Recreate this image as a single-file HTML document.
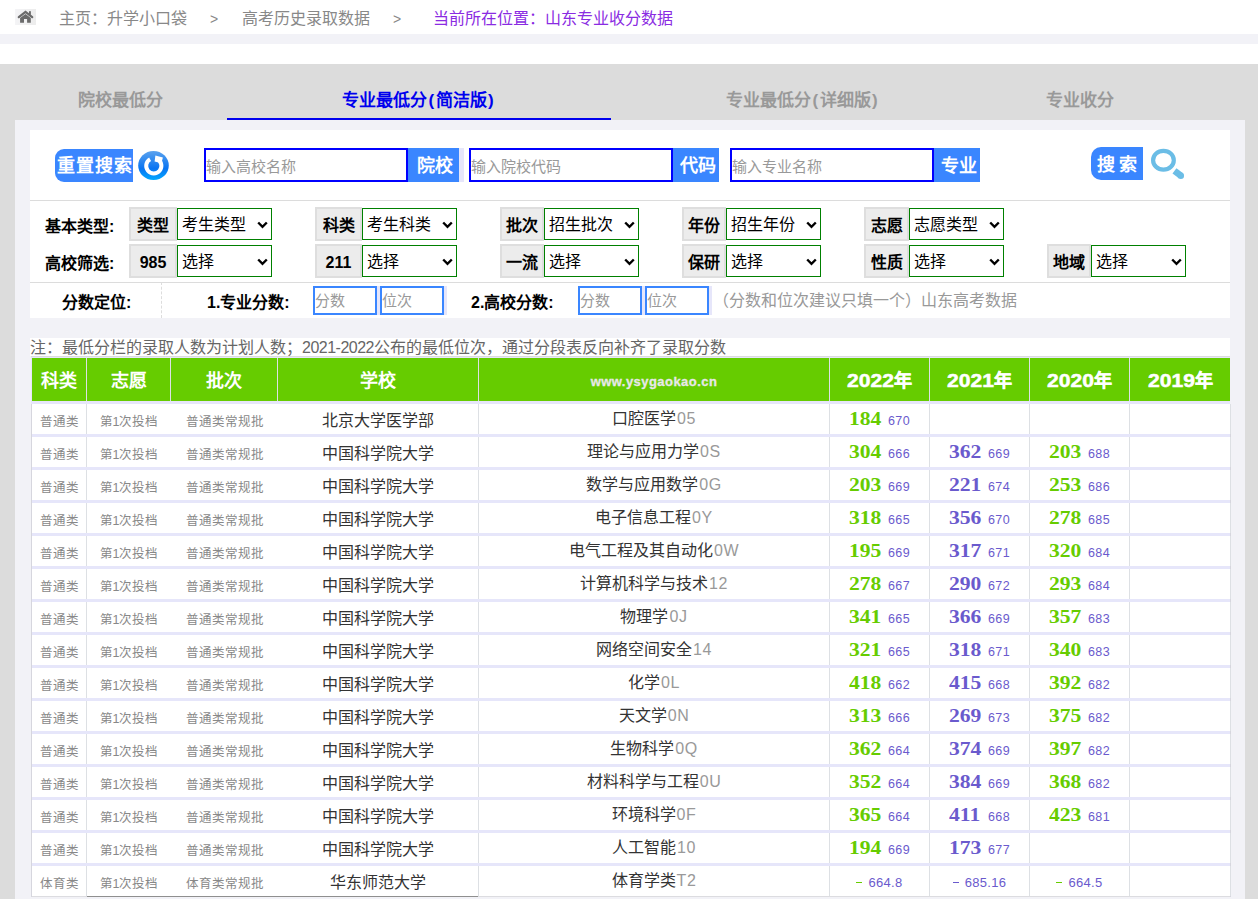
<!DOCTYPE html>
<html lang="zh-CN">
<head>
<meta charset="utf-8">
<style>
*{box-sizing:border-box;margin:0;padding:0}
html,body{width:1258px;height:899px;overflow:hidden;background:#fff;font-family:"Liberation Sans",sans-serif;}
.abs{position:absolute;white-space:nowrap}
#crumb{font-size:16px;color:#888;line-height:20px;margin-top:1px}
.strip{position:absolute;left:0;top:34px;width:1258px;height:10px;background:#f2f2f7}
.gpanel{position:absolute;left:0;top:64px;width:1258px;height:835px;background:#dcdcdc}
.lpanel{position:absolute;left:15px;top:120px;width:1230px;height:779px;background:#f2f2f7}
.tab{position:absolute;top:91px;font-size:17px;font-weight:bold;color:#999;line-height:20px;white-space:nowrap}
.tab.act{color:#0000ee}
.uline{position:absolute;left:227px;top:118px;width:384px;height:2px;background:#0000ee}
.wbox{position:absolute;left:30px;top:130px;width:1200px;height:188px;background:#fff}
.sep{position:absolute;left:30px;width:1200px;height:1px;background:#dcdcdc}
.btnr{position:absolute;background:#3a86ff;color:#fff;font-family:"Liberation Serif",serif;font-weight:bold;font-size:18px;letter-spacing:1px;text-indent:1px;line-height:35px;text-align:center;border-radius:9px 0 0 9px}
.inp{position:absolute;border:2px solid #0000ff;background:#fff;color:#999;font-size:15px;line-height:33px;padding-left:0px;white-space:nowrap}
.ibtn{position:absolute;background:#3a86ff;color:#fff;font-size:18px;font-weight:bold;line-height:37px;text-align:center}
.lab{position:absolute;font-size:16px;font-weight:bold;color:#000;line-height:20px;white-space:nowrap}
.lbox{position:absolute;height:34px;background:#ececec;border:2px solid #dedede;font-size:16px;font-weight:bold;text-align:center;line-height:34px;color:#000}
.sel{position:absolute;height:32px;border:1px solid #008000;background:#fff;font-size:16px;line-height:32px;padding-left:4px;color:#000;white-space:nowrap}
.sel .arr{position:absolute;left:79px;top:12px;width:11px;height:8px}
.sinp{position:absolute;top:286px;width:64px;height:29px;border:2px solid #3a86ff;background:#fff;color:#999;font-size:15px;line-height:26px;padding-left:0px}
.sstrip{position:absolute;top:286px;height:29px;width:3px;background:#e6e6fa}
.note{position:absolute;left:30px;top:338px;width:1200px;height:18px;background:#fff;font-size:16px;color:#666;line-height:20px;white-space:nowrap}
.thead{position:absolute;left:31px;top:356px;width:1199px;height:48px;border-top:1px solid #dcdcdc;background:#e6e6fa}
.hrow{position:absolute;left:32px;top:358px;width:1198px;height:43px;background:#66cc00}
.hc{position:absolute;top:0;height:43px;border-right:1px solid #dde0e4;color:#fff;font-weight:bold;font-size:18px;line-height:47px;text-align:center;white-space:nowrap}
.tbody{position:absolute;left:31px;top:404px;width:1200px;height:493px;border-left:1px solid #d6d6de;border-right:1px solid #d6d6de}
.row{position:absolute;left:32px;width:1198px;height:33px;background:#fff;border-bottom:3px solid #e6e6fa}
.c{position:absolute;top:0;height:30px;border-right:1px solid #dde0e4;text-align:center;white-space:nowrap;line-height:30px}
.s{font-size:12.5px;color:#888;line-height:37px}
.sch{font-size:16px;color:#333;line-height:33px}
.maj{font-size:16px;color:#333}
.code{color:#999;font-size:16px;letter-spacing:0.6px;margin-left:1px}
.yr{line-height:31px}
.sc{display:inline-block;width:33px;margin-right:6px;text-align:left;font-family:"Liberation Serif",serif;font-weight:bold;font-size:18px}
.sc i{font-style:normal;display:inline-block;transform:scaleX(1.2);transform-origin:0 50%}
.g{color:#66cc00}
.p{color:#6a5acd}
.rk{font-size:12.5px;color:#6a5acd;letter-spacing:0.4px}
.rk2{font-size:13px;letter-spacing:0.3px;margin-left:6px}
.dash{display:inline-block;width:6px;height:1.5px;vertical-align:4px}
.gbg{background:#66cc00}.pbg{background:#6a5acd}

.row.last{height:31px;border-bottom:1px solid #dcdce0}
.par{display:inline-block;width:8.5px;text-align:center}
.yr2{letter-spacing:-0.5px}
.hy{-webkit-text-stroke:0.5px #fff}
.hy i{font-style:normal;display:inline-block;width:47px;text-align:left}
.hy i b{display:inline-block;transform:scaleX(1.17);transform-origin:0 50%}
</style>
</head>
<body>
<!-- breadcrumb -->
<div class="abs" style="left:15px;top:9px;width:21px;height:16px;background:linear-gradient(90deg,#f4f4f6,#ececec)"></div>
<svg class="abs" style="left:15px;top:9px" width="21" height="16" viewBox="0 0 21 16"><polyline points="3.8,8.2 10.5,2.8 17.2,8.2" fill="none" stroke="#6b6b6b" stroke-width="2.2" stroke-linecap="round"/><path d="M5.1 9.1 L10.5 5.1 L15.8 9.1 V13.8 H12.1 V9.9 H9 V13.8 H5.1 Z" fill="#6b6b6b"/><rect x="14" y="2.2" width="1.9" height="3.6" fill="#6b6b6b"/></svg>
<div id="crumb" class="abs" style="left:59px;top:8px">主页：升学小口袋</div>
<div id="crumb" class="abs" style="left:210px;top:7.5px;color:#888;font-size:14px">&gt;</div>
<div id="crumb" class="abs" style="left:242px;top:8px">高考历史录取数据</div>
<div id="crumb" class="abs" style="left:393px;top:7.5px;color:#888;font-size:14px">&gt;</div>
<div id="crumb" class="abs" style="left:433px;top:8px;color:#8a2be2">当前所在位置：山东专业收分数据</div>
<div class="strip"></div>
<div class="gpanel"></div>
<div class="lpanel"></div>
<div class="tab" style="left:78px">院校最低分</div>
<div class="tab act" style="left:342px">专业最低分<span class="par">(</span>简洁版<span class="par">)</span></div>
<div class="tab" style="left:726px">专业最低分<span class="par">(</span>详细版<span class="par">)</span></div>
<div class="tab" style="left:1046px">专业收分</div>
<div class="uline"></div>
<div class="wbox"></div>
<div class="sep" style="top:200px"></div>
<div class="sep" style="top:282px"></div>
<!-- search row -->
<div class="btnr" style="left:55px;top:149px;width:78px;height:33px">重置搜索</div>
<svg class="abs" style="left:138px;top:151px" width="31" height="29" viewBox="0 0 31 29">
<defs><linearGradient id="rg" x1="0" y1="0" x2="0" y2="1"><stop offset="0" stop-color="#5aa2ee"/><stop offset="0.6" stop-color="#0a74f2"/><stop offset="1" stop-color="#00a8ff"/></linearGradient></defs>
<ellipse cx="15.5" cy="14.5" rx="15.3" ry="14.5" fill="url(#rg)"/>
<path d="M12.1 8.25 A7.6 7.6 0 1 0 19.6 8.3" fill="none" stroke="#fff" stroke-width="4"/>
<path d="M17.4 4.6 L24.9 6.6 L24 9.9 L20.6 11.6 L16.6 10.5 Z" fill="#fff"/>
</svg>
<div class="inp" style="left:204px;top:148px;width:204px;height:34px">输入高校名称</div>
<div class="ibtn" style="left:408px;top:148px;width:51px;height:34px;text-align:left;padding-left:9px">院校</div>
<div class="abs" style="left:459px;top:148px;width:5px;height:34px;background:#e6e6fa"></div>
<div class="inp" style="left:469px;top:148px;width:204px;height:34px">输入院校代码</div>
<div class="ibtn" style="left:673px;top:148px;width:46px;height:34px;text-align:left;padding-left:7px">代码</div>
<div class="inp" style="left:730px;top:148px;width:204px;height:34px">输入专业名称</div>
<div class="ibtn" style="left:934px;top:148px;width:46px;height:34px;text-align:left;padding-left:7px">专业</div>
<div class="btnr" style="left:1091px;top:147px;width:52px;height:33px;border-radius:10px 0 0 10px;letter-spacing:4px;text-indent:4px;line-height:36px">搜索</div>
<svg class="abs" style="left:1148px;top:146px" width="40" height="36" viewBox="0 0 40 36">
<ellipse cx="15.45" cy="14.2" rx="10.35" ry="9.4" fill="none" stroke="#6bbde6" stroke-width="4.2"/>
<path d="M26.5 24.9 L32.8 29.7" stroke="#6bbde6" stroke-width="6.5"/><circle cx="32.8" cy="29.7" r="3.25" fill="#6bbde6"/>
</svg>
<!-- filter rows -->
<div class="lab" style="left:45px;top:217px">基本类型:</div>
<div class="lab" style="left:45px;top:254px">高校筛选:</div>
<div class="lbox" style="left:129px;top:207px;width:48px">类型</div>
<div class="sel" style="left:177px;top:208px;width:95px">考生类型<svg class="arr" viewBox="0 0 11 8"><path d="M1.2 1.5 L5.5 5.8 L9.8 1.5" fill="none" stroke="#000" stroke-width="2.4"/></svg></div>
<div class="lbox" style="left:315px;top:207px;width:47px">科类</div>
<div class="sel" style="left:362px;top:208px;width:95px">考生科类<svg class="arr" viewBox="0 0 11 8"><path d="M1.2 1.5 L5.5 5.8 L9.8 1.5" fill="none" stroke="#000" stroke-width="2.4"/></svg></div>
<div class="lbox" style="left:500px;top:207px;width:44px">批次</div>
<div class="sel" style="left:544px;top:208px;width:95px">招生批次<svg class="arr" viewBox="0 0 11 8"><path d="M1.2 1.5 L5.5 5.8 L9.8 1.5" fill="none" stroke="#000" stroke-width="2.4"/></svg></div>
<div class="lbox" style="left:682px;top:207px;width:44px">年份</div>
<div class="sel" style="left:726px;top:208px;width:95px">招生年份<svg class="arr" viewBox="0 0 11 8"><path d="M1.2 1.5 L5.5 5.8 L9.8 1.5" fill="none" stroke="#000" stroke-width="2.4"/></svg></div>
<div class="lbox" style="left:864px;top:207px;width:45px">志愿</div>
<div class="sel" style="left:909px;top:208px;width:95px">志愿类型<svg class="arr" viewBox="0 0 11 8"><path d="M1.2 1.5 L5.5 5.8 L9.8 1.5" fill="none" stroke="#000" stroke-width="2.4"/></svg></div>
<div class="lbox" style="left:129px;top:244px;width:48px">985</div>
<div class="sel" style="left:177px;top:245px;width:95px">选择<svg class="arr" viewBox="0 0 11 8"><path d="M1.2 1.5 L5.5 5.8 L9.8 1.5" fill="none" stroke="#000" stroke-width="2.4"/></svg></div>
<div class="lbox" style="left:315px;top:244px;width:47px">211</div>
<div class="sel" style="left:362px;top:245px;width:95px">选择<svg class="arr" viewBox="0 0 11 8"><path d="M1.2 1.5 L5.5 5.8 L9.8 1.5" fill="none" stroke="#000" stroke-width="2.4"/></svg></div>
<div class="lbox" style="left:500px;top:244px;width:44px">一流</div>
<div class="sel" style="left:544px;top:245px;width:95px">选择<svg class="arr" viewBox="0 0 11 8"><path d="M1.2 1.5 L5.5 5.8 L9.8 1.5" fill="none" stroke="#000" stroke-width="2.4"/></svg></div>
<div class="lbox" style="left:682px;top:244px;width:44px">保研</div>
<div class="sel" style="left:726px;top:245px;width:95px">选择<svg class="arr" viewBox="0 0 11 8"><path d="M1.2 1.5 L5.5 5.8 L9.8 1.5" fill="none" stroke="#000" stroke-width="2.4"/></svg></div>
<div class="lbox" style="left:864px;top:244px;width:45px">性质</div>
<div class="sel" style="left:909px;top:245px;width:95px">选择<svg class="arr" viewBox="0 0 11 8"><path d="M1.2 1.5 L5.5 5.8 L9.8 1.5" fill="none" stroke="#000" stroke-width="2.4"/></svg></div>
<div class="lbox" style="left:1047px;top:244px;width:44px">地域</div>
<div class="sel" style="left:1091px;top:245px;width:95px">选择<svg class="arr" viewBox="0 0 11 8"><path d="M1.2 1.5 L5.5 5.8 L9.8 1.5" fill="none" stroke="#000" stroke-width="2.4"/></svg></div><!-- score row -->
<div class="abs" style="left:161px;top:282px;width:0;height:36px;border-left:1px dashed #ddd"></div>
<div class="lab" style="left:62px;top:293px">分数定位:</div>
<div class="lab" style="left:207px;top:293px">1.专业分数:</div>
<div class="sinp" style="left:313px">分数</div>
<div class="sstrip" style="left:377px"></div>
<div class="sinp" style="left:380px">位次</div>
<div class="sstrip" style="left:444px"></div>
<div class="lab" style="left:471px;top:293px">2.高校分数:</div>
<div class="sinp" style="left:578px">分数</div>
<div class="sstrip" style="left:642px"></div>
<div class="sinp" style="left:645px">位次</div>
<div class="sstrip" style="left:709px"></div>
<div class="abs" style="left:713px;top:291px;font-size:16px;color:#999;line-height:20px">（分数和位次建议只填一个）山东高考数据</div>
<!-- note -->
<div class="note">注：最低分栏的录取人数为计划人数；<span class="yr2">2021-2022</span>公布的最低位次，通过分段表反向补齐了录取分数</div>
<!-- table -->
<div class="thead"></div>
<div class="tbody"></div>
<div class="hrow">
<div class="hc" style="left:0;width:55px">科类</div>
<div class="hc" style="left:55px;width:84px">志愿</div>
<div class="hc" style="left:139px;width:107px">批次</div>
<div class="hc" style="left:246px;width:201px">学校</div>
<div class="hc" style="left:447px;width:351px;font-size:13px;color:#e8e8e8;letter-spacing:0.45px;-webkit-text-stroke:0.3px #e8e8e8">www.ysygaokao.cn</div>
<div class="hc" style="left:798px;width:100px"><span class="hy"><i><b>2022</b></i>年</span></div>
<div class="hc" style="left:898px;width:100px"><span class="hy"><i><b>2021</b></i>年</span></div>
<div class="hc" style="left:998px;width:100px"><span class="hy"><i><b>2020</b></i>年</span></div>
<div class="hc" style="left:1098px;width:100px;border-right:none"><span class="hy"><i><b>2019</b></i>年</span></div>
</div>
<div class="row" style="top:404px">
<div class="c s" style="left:0;width:55px">普通类</div>
<div class="c s" style="left:55px;width:84px;border-right:none">第1次投档</div>
<div class="c s" style="left:139px;width:107px;border-right:none">普通类常规批</div>
<div class="c sch" style="left:246px;width:201px">北京大学医学部</div>
<div class="c maj" style="left:447px;width:351px">口腔医学<span class="code">05</span></div>
<div class="c yr" style="left:798px;width:100px"><span class="sc g"><i>184</i></span><span class="rk">670</span></div>
<div class="c yr" style="left:898px;width:100px"></div>
<div class="c yr" style="left:998px;width:100px"></div>
<div class="c yr" style="left:1098px;width:101px"></div>
</div>
<div class="row" style="top:437px">
<div class="c s" style="left:0;width:55px">普通类</div>
<div class="c s" style="left:55px;width:84px;border-right:none">第1次投档</div>
<div class="c s" style="left:139px;width:107px;border-right:none">普通类常规批</div>
<div class="c sch" style="left:246px;width:201px">中国科学院大学</div>
<div class="c maj" style="left:447px;width:351px">理论与应用力学<span class="code">0S</span></div>
<div class="c yr" style="left:798px;width:100px"><span class="sc g"><i>304</i></span><span class="rk">666</span></div>
<div class="c yr" style="left:898px;width:100px"><span class="sc p"><i>362</i></span><span class="rk">669</span></div>
<div class="c yr" style="left:998px;width:100px"><span class="sc g"><i>203</i></span><span class="rk">688</span></div>
<div class="c yr" style="left:1098px;width:101px"></div>
</div>
<div class="row" style="top:470px">
<div class="c s" style="left:0;width:55px">普通类</div>
<div class="c s" style="left:55px;width:84px;border-right:none">第1次投档</div>
<div class="c s" style="left:139px;width:107px;border-right:none">普通类常规批</div>
<div class="c sch" style="left:246px;width:201px">中国科学院大学</div>
<div class="c maj" style="left:447px;width:351px">数学与应用数学<span class="code">0G</span></div>
<div class="c yr" style="left:798px;width:100px"><span class="sc g"><i>203</i></span><span class="rk">669</span></div>
<div class="c yr" style="left:898px;width:100px"><span class="sc p"><i>221</i></span><span class="rk">674</span></div>
<div class="c yr" style="left:998px;width:100px"><span class="sc g"><i>253</i></span><span class="rk">686</span></div>
<div class="c yr" style="left:1098px;width:101px"></div>
</div>
<div class="row" style="top:503px">
<div class="c s" style="left:0;width:55px">普通类</div>
<div class="c s" style="left:55px;width:84px;border-right:none">第1次投档</div>
<div class="c s" style="left:139px;width:107px;border-right:none">普通类常规批</div>
<div class="c sch" style="left:246px;width:201px">中国科学院大学</div>
<div class="c maj" style="left:447px;width:351px">电子信息工程<span class="code">0Y</span></div>
<div class="c yr" style="left:798px;width:100px"><span class="sc g"><i>318</i></span><span class="rk">665</span></div>
<div class="c yr" style="left:898px;width:100px"><span class="sc p"><i>356</i></span><span class="rk">670</span></div>
<div class="c yr" style="left:998px;width:100px"><span class="sc g"><i>278</i></span><span class="rk">685</span></div>
<div class="c yr" style="left:1098px;width:101px"></div>
</div>
<div class="row" style="top:536px">
<div class="c s" style="left:0;width:55px">普通类</div>
<div class="c s" style="left:55px;width:84px;border-right:none">第1次投档</div>
<div class="c s" style="left:139px;width:107px;border-right:none">普通类常规批</div>
<div class="c sch" style="left:246px;width:201px">中国科学院大学</div>
<div class="c maj" style="left:447px;width:351px">电气工程及其自动化<span class="code">0W</span></div>
<div class="c yr" style="left:798px;width:100px"><span class="sc g"><i>195</i></span><span class="rk">669</span></div>
<div class="c yr" style="left:898px;width:100px"><span class="sc p"><i>317</i></span><span class="rk">671</span></div>
<div class="c yr" style="left:998px;width:100px"><span class="sc g"><i>320</i></span><span class="rk">684</span></div>
<div class="c yr" style="left:1098px;width:101px"></div>
</div>
<div class="row" style="top:569px">
<div class="c s" style="left:0;width:55px">普通类</div>
<div class="c s" style="left:55px;width:84px;border-right:none">第1次投档</div>
<div class="c s" style="left:139px;width:107px;border-right:none">普通类常规批</div>
<div class="c sch" style="left:246px;width:201px">中国科学院大学</div>
<div class="c maj" style="left:447px;width:351px">计算机科学与技术<span class="code">12</span></div>
<div class="c yr" style="left:798px;width:100px"><span class="sc g"><i>278</i></span><span class="rk">667</span></div>
<div class="c yr" style="left:898px;width:100px"><span class="sc p"><i>290</i></span><span class="rk">672</span></div>
<div class="c yr" style="left:998px;width:100px"><span class="sc g"><i>293</i></span><span class="rk">684</span></div>
<div class="c yr" style="left:1098px;width:101px"></div>
</div>
<div class="row" style="top:602px">
<div class="c s" style="left:0;width:55px">普通类</div>
<div class="c s" style="left:55px;width:84px;border-right:none">第1次投档</div>
<div class="c s" style="left:139px;width:107px;border-right:none">普通类常规批</div>
<div class="c sch" style="left:246px;width:201px">中国科学院大学</div>
<div class="c maj" style="left:447px;width:351px">物理学<span class="code">0J</span></div>
<div class="c yr" style="left:798px;width:100px"><span class="sc g"><i>341</i></span><span class="rk">665</span></div>
<div class="c yr" style="left:898px;width:100px"><span class="sc p"><i>366</i></span><span class="rk">669</span></div>
<div class="c yr" style="left:998px;width:100px"><span class="sc g"><i>357</i></span><span class="rk">683</span></div>
<div class="c yr" style="left:1098px;width:101px"></div>
</div>
<div class="row" style="top:635px">
<div class="c s" style="left:0;width:55px">普通类</div>
<div class="c s" style="left:55px;width:84px;border-right:none">第1次投档</div>
<div class="c s" style="left:139px;width:107px;border-right:none">普通类常规批</div>
<div class="c sch" style="left:246px;width:201px">中国科学院大学</div>
<div class="c maj" style="left:447px;width:351px">网络空间安全<span class="code">14</span></div>
<div class="c yr" style="left:798px;width:100px"><span class="sc g"><i>321</i></span><span class="rk">665</span></div>
<div class="c yr" style="left:898px;width:100px"><span class="sc p"><i>318</i></span><span class="rk">671</span></div>
<div class="c yr" style="left:998px;width:100px"><span class="sc g"><i>340</i></span><span class="rk">683</span></div>
<div class="c yr" style="left:1098px;width:101px"></div>
</div>
<div class="row" style="top:668px">
<div class="c s" style="left:0;width:55px">普通类</div>
<div class="c s" style="left:55px;width:84px;border-right:none">第1次投档</div>
<div class="c s" style="left:139px;width:107px;border-right:none">普通类常规批</div>
<div class="c sch" style="left:246px;width:201px">中国科学院大学</div>
<div class="c maj" style="left:447px;width:351px">化学<span class="code">0L</span></div>
<div class="c yr" style="left:798px;width:100px"><span class="sc g"><i>418</i></span><span class="rk">662</span></div>
<div class="c yr" style="left:898px;width:100px"><span class="sc p"><i>415</i></span><span class="rk">668</span></div>
<div class="c yr" style="left:998px;width:100px"><span class="sc g"><i>392</i></span><span class="rk">682</span></div>
<div class="c yr" style="left:1098px;width:101px"></div>
</div>
<div class="row" style="top:701px">
<div class="c s" style="left:0;width:55px">普通类</div>
<div class="c s" style="left:55px;width:84px;border-right:none">第1次投档</div>
<div class="c s" style="left:139px;width:107px;border-right:none">普通类常规批</div>
<div class="c sch" style="left:246px;width:201px">中国科学院大学</div>
<div class="c maj" style="left:447px;width:351px">天文学<span class="code">0N</span></div>
<div class="c yr" style="left:798px;width:100px"><span class="sc g"><i>313</i></span><span class="rk">666</span></div>
<div class="c yr" style="left:898px;width:100px"><span class="sc p"><i>269</i></span><span class="rk">673</span></div>
<div class="c yr" style="left:998px;width:100px"><span class="sc g"><i>375</i></span><span class="rk">682</span></div>
<div class="c yr" style="left:1098px;width:101px"></div>
</div>
<div class="row" style="top:734px">
<div class="c s" style="left:0;width:55px">普通类</div>
<div class="c s" style="left:55px;width:84px;border-right:none">第1次投档</div>
<div class="c s" style="left:139px;width:107px;border-right:none">普通类常规批</div>
<div class="c sch" style="left:246px;width:201px">中国科学院大学</div>
<div class="c maj" style="left:447px;width:351px">生物科学<span class="code">0Q</span></div>
<div class="c yr" style="left:798px;width:100px"><span class="sc g"><i>362</i></span><span class="rk">664</span></div>
<div class="c yr" style="left:898px;width:100px"><span class="sc p"><i>374</i></span><span class="rk">669</span></div>
<div class="c yr" style="left:998px;width:100px"><span class="sc g"><i>397</i></span><span class="rk">682</span></div>
<div class="c yr" style="left:1098px;width:101px"></div>
</div>
<div class="row" style="top:767px">
<div class="c s" style="left:0;width:55px">普通类</div>
<div class="c s" style="left:55px;width:84px;border-right:none">第1次投档</div>
<div class="c s" style="left:139px;width:107px;border-right:none">普通类常规批</div>
<div class="c sch" style="left:246px;width:201px">中国科学院大学</div>
<div class="c maj" style="left:447px;width:351px">材料科学与工程<span class="code">0U</span></div>
<div class="c yr" style="left:798px;width:100px"><span class="sc g"><i>352</i></span><span class="rk">664</span></div>
<div class="c yr" style="left:898px;width:100px"><span class="sc p"><i>384</i></span><span class="rk">669</span></div>
<div class="c yr" style="left:998px;width:100px"><span class="sc g"><i>368</i></span><span class="rk">682</span></div>
<div class="c yr" style="left:1098px;width:101px"></div>
</div>
<div class="row" style="top:800px">
<div class="c s" style="left:0;width:55px">普通类</div>
<div class="c s" style="left:55px;width:84px;border-right:none">第1次投档</div>
<div class="c s" style="left:139px;width:107px;border-right:none">普通类常规批</div>
<div class="c sch" style="left:246px;width:201px">中国科学院大学</div>
<div class="c maj" style="left:447px;width:351px">环境科学<span class="code">0F</span></div>
<div class="c yr" style="left:798px;width:100px"><span class="sc g"><i>365</i></span><span class="rk">664</span></div>
<div class="c yr" style="left:898px;width:100px"><span class="sc p"><i>411</i></span><span class="rk">668</span></div>
<div class="c yr" style="left:998px;width:100px"><span class="sc g"><i>423</i></span><span class="rk">681</span></div>
<div class="c yr" style="left:1098px;width:101px"></div>
</div>
<div class="row" style="top:833px">
<div class="c s" style="left:0;width:55px">普通类</div>
<div class="c s" style="left:55px;width:84px;border-right:none">第1次投档</div>
<div class="c s" style="left:139px;width:107px;border-right:none">普通类常规批</div>
<div class="c sch" style="left:246px;width:201px">中国科学院大学</div>
<div class="c maj" style="left:447px;width:351px">人工智能<span class="code">10</span></div>
<div class="c yr" style="left:798px;width:100px"><span class="sc g"><i>194</i></span><span class="rk">669</span></div>
<div class="c yr" style="left:898px;width:100px"><span class="sc p"><i>173</i></span><span class="rk">677</span></div>
<div class="c yr" style="left:998px;width:100px"></div>
<div class="c yr" style="left:1098px;width:101px"></div>
</div>
<div class="row last" style="top:866px">
<div class="c s" style="left:0;width:55px">体育类</div>
<div class="c s" style="left:55px;width:84px;border-right:none">第1次投档</div>
<div class="c s" style="left:139px;width:107px;border-right:none">体育类常规批</div>
<div class="c sch" style="left:246px;width:201px">华东师范大学</div>
<div class="c maj" style="left:447px;width:351px">体育学类<span class="code">T2</span></div>
<div class="c yr" style="left:798px;width:100px"><span class="dash gbg"></span><span class="rk rk2">664.8</span></div>
<div class="c yr" style="left:898px;width:100px"><span class="dash pbg"></span><span class="rk rk2">685.16</span></div>
<div class="c yr" style="left:998px;width:100px"><span class="dash gbg"></span><span class="rk rk2">664.5</span></div>
<div class="c yr" style="left:1098px;width:101px"></div>
</div>
<div class="abs" style="left:87px;top:896px;width:391px;height:1px;background:#8f8f8f"></div></body></html>
